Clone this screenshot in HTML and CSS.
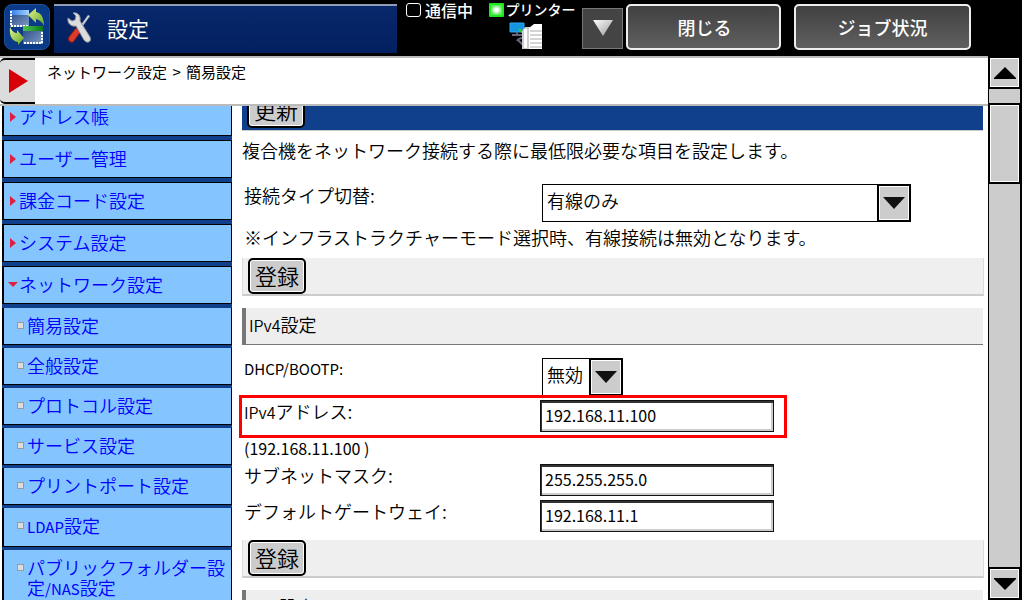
FILE: index.html
```html
<!DOCTYPE html>
<html lang="ja">
<head>
<meta charset="utf-8">
<meta name="viewport" content="width=device-width, initial-scale=1">
<title>設定</title>
<link rel="stylesheet" href="styles.css">
</head>
<body>
<header class="topbar">
  <button class="switch" type="button" aria-label="画面切替">
    <svg viewBox="0 0 46 46" width="46" height="46">
      <defs>
        <linearGradient id="leaf" x1="0" y1="0" x2="1" y2="1"><stop offset="0" stop-color="#e4f58a"/><stop offset="1" stop-color="#62a428"/></linearGradient>
        <linearGradient id="pane" x1="0" y1="0" x2="1" y2="1"><stop offset="0" stop-color="#23457f"/><stop offset="1" stop-color="#7f9cc8"/></linearGradient>
        <linearGradient id="bar1"><stop offset="0" stop-color="#2a78e8"/><stop offset="1" stop-color="#a8d4ff"/></linearGradient>
        <linearGradient id="bar2"><stop offset="0" stop-color="#4fc44f"/><stop offset="1" stop-color="#0b7a18"/></linearGradient>
      </defs>
      <rect x="6" y="6" width="19" height="17" fill="url(#pane)"/>
      <path d="M6 6h19v5H6z" fill="url(#bar1)"/>
      <path d="M7 7v15h18" fill="none" stroke="#fff" stroke-width="2" stroke-dasharray="2 1"/>
      <path d="M24 11l8-7v4c5 1 8 5 8 14-2-4-4-6-8-7v4z" fill="url(#leaf)"/>
      <rect x="19" y="22" width="20" height="18" fill="url(#pane)"/>
      <path d="M19 22h20v5H19z" fill="url(#bar2)"/>
      <path d="M38 28v11H20" fill="none" stroke="#fff" stroke-width="2" stroke-dasharray="2 1"/>
      <path d="M6 23c2 4 4 6 7 6v-3l7 8-6 7v-3c-6-1-9-6-8-15z" fill="url(#leaf)"/>
    </svg>
  </button>
  <h1 class="title">
    <svg viewBox="0 0 26 34" width="26" height="34" aria-hidden="true">
      <path d="M21 4l2 1L13 19l-2-1z" fill="#c9ccd2"/>
      <path d="M9 17l5 3-7 10c-2 3-7 0-5-4z" fill="#dc3a2c" stroke="#8c1a12"/>
      <path d="M1 7l4 3 3-1 1-4-3-3c5-1 8 3 7 8l10 16c2 5-3 7-6 3L9 15C4 16 0 12 1 7z" fill="#dcdcdc" stroke="#8d929c"/>
    </svg>
    <span>設定</span>
  </h1>
  <div class="status"><span class="lamp"></span>通信中</div>
  <div class="printer">
    <div class="printer-name"><span class="lamp on"></span>プリンター</div>
    <svg viewBox="0 0 34 28" width="34" height="28" aria-hidden="true">
      <path d="M1 1h14v9H1z" fill="#1595e0" stroke="#2fa8ee"/>
      <path d="M8 10v3M3 13h10M8 19c1-2 3-3 6-3M9 18l5 5" stroke="#667" stroke-width="2" fill="none"/>
      <path d="M10 7l5 5" stroke="#27d51f" stroke-width="2"/>
      <path d="M13 9l3-4h5v22h-8z" fill="#c9ced2"/>
      <path d="M15 7h3v19h-3z" fill="#fff"/>
      <path d="M20 6l5-4h8v25H20z" fill="#fff"/>
      <path d="M21 9h12M21 13h12M21 17h12M21 21h12M21 25h12" stroke="#aaa"/>
    </svg>
  </div>
  <button class="more" type="button" aria-label="詳細">
    <svg viewBox="0 0 20 17" width="20" height="17"><defs><linearGradient id="tri" x2="1" y2="1"><stop offset="0" stop-color="#fff"/><stop offset="1" stop-color="#999"/></linearGradient></defs><path d="M0 0h20L10 16z" fill="url(#tri)"/></svg>
  </button>
  <button class="key close" type="button">閉じる</button>
  <button class="key job" type="button">ジョブ状況</button>
</header>

<div class="screen">
  <div class="page">
    <nav class="crumbs" aria-label="パンくず">
      <button class="expand" type="button" aria-label="メニュー"><svg viewBox="0 0 19 24" width="19" height="24"><path d="M0 0l19 12L0 24z" fill="#d80008"/></svg></button>
      <span>ネットワーク設定<span class="sep"> &gt; </span>簡易設定</span>
    </nav>
    <div class="columns">
      <nav class="menu" aria-label="設定メニュー">
        <a class="item" href="#">アドレス帳</a>
        <a class="item" href="#">ユーザー管理</a>
        <a class="item" href="#">課金コード設定</a>
        <a class="item" href="#">システム設定</a>
        <a class="item open" href="#">ネットワーク設定</a>
        <a class="sub" href="#">簡易設定</a>
        <a class="sub" href="#">全般設定</a>
        <a class="sub" href="#">プロトコル設定</a>
        <a class="sub" href="#">サービス設定</a>
        <a class="sub" href="#">プリントポート設定</a>
        <a class="sub" href="#"><span class="caps">LDAP</span>設定</a>
        <a class="sub" href="#">パブリックフォルダー設定<span class="caps">/NAS</span>設定</a>
      </nav>
      <main class="content">
        <div class="refresh"><button class="btn" type="button">更新</button></div>
        <p class="intro">複合機をネットワーク接続する際に最低限必要な項目を設定します。</p>
        <div class="row">
          <label for="type">接続タイプ切替:</label>
          <div class="pick wide"><select id="type"><option>有線のみ</option></select><span class="arrow"></span></div>
        </div>
        <p class="note">※インフラストラクチャーモード選択時、有線接続は無効となります。</p>
        <div class="actions"><button class="btn" type="button">登録</button></div>
        <h2 class="heading"><span class="latin">IPv4</span>設定</h2>
        <div class="row">
          <label for="dhcp" class="caps">DHCP/BOOTP:</label>
          <div class="pick"><select id="dhcp"><option>無効</option></select><span class="arrow"></span></div>
        </div>
        <div class="row marked">
          <label for="ip"><span class="latin">IPv4</span>アドレス:</label>
          <input id="ip" type="text" value="192.168.11.100">
        </div>
        <p class="current">(192.168.11.100 )</p>
        <div class="row">
          <label for="mask">サブネットマスク:</label>
          <input id="mask" type="text" value="255.255.255.0">
        </div>
        <div class="row">
          <label for="gw">デフォルトゲートウェイ:</label>
          <input id="gw" type="text" value="192.168.11.1">
        </div>
        <div class="actions"><button class="btn" type="button">登録</button></div>
        <h2 class="heading"><span class="caps">DNS</span>設定</h2>
      </main>
    </div>
  </div>
  <div class="scroll">
    <button class="step" type="button" aria-label="上へ"><svg viewBox="0 0 22 12" width="22" height="12"><path d="M11 0l11 11v1H0v-1z"/></svg></button>
    <span class="track before"></span>
    <span class="thumb"></span>
    <span class="track after"></span>
    <button class="step" type="button" aria-label="下へ"><svg viewBox="0 0 22 12" width="22" height="12"><path d="M11 12l11-11V0H0v1z"/></svg></button>
  </div>
</div>
</body>
</html>
```
FILE: styles.css
```css
*, *::before, *::after { box-sizing: border-box; }
body {
  margin: 0;
  height: 100vh;
  display: flex;
  flex-direction: column;
  overflow: hidden;
  background: #000;
  color: #000;
  font: 350 18px/22px "Noto Sans CJK JP", sans-serif;
}
button, input, select { font: inherit; color: inherit; margin: 0; border-radius: 0; }
button { padding: 0; cursor: pointer; }
h1, h2, p { margin: 0; font-weight: inherit; }
svg { display: block; }

.topbar { display: flex; align-items: flex-start; flex: none; padding: 4px 51px 3px 4px; color: #fff; }
.switch { width: 46px; height: 46px; border: 1px solid #1d4f9c; border-radius: 8px; background: #0b3a88; overflow: hidden; }
.switch svg { margin: -1px; }
.title {
  flex: 1; display: flex; align-items: center; gap: 14px; height: 49px; margin-left: 4px; padding: 0 13px 4px;
  border-top: 2px solid #8f9db8; background: linear-gradient(#08286c, #02205f);
  font-size: 21px; font-weight: 400;
}
.status { display: flex; align-items: center; gap: 4px; height: 12px; margin-left: 9px; font-size: 16px; font-weight: 500; }
.lamp { flex: none; width: 15px; height: 14px; border: 1px solid #fff; border-radius: 3px; }
.lamp.on { border: 2px solid #20e820; border-radius: 1px; background: radial-gradient(#fff 20%, #5be85b 70%); }
.printer { display: flex; flex-direction: column; align-items: center; gap: 6px; margin: -2px 0 0 16px; width: 86px; }
.printer-name { display: flex; align-items: center; gap: 2px; height: 14px; font-size: 14px; font-weight: 500; white-space: nowrap; }
.printer svg { margin-right: 12px; }
.printer .lamp { margin-top: 2px; }
.more { display: grid; place-items: center; width: 41px; height: 41px; margin: 4px 3px 0 7px; border: 1px solid #777; background: #444; }
.key { height: 46px; border: 2px solid #eee; border-radius: 5px; background: linear-gradient(#404040, #606060); font-weight: 500; }
.close { width: 155px; margin-right: 13px; padding-left: 2px; }
.job { width: 177px; }

.screen { flex: 1; display: flex; min-height: 0; }
.page { flex: 1; display: flex; flex-direction: column; min-width: 0; background: #fff; border-top: 2px solid #bbb; }
.crumbs { display: flex; flex: none; gap: 12px; height: 48px; border-bottom: 2px solid #bbb; font-size: 15px; line-height: 28px; font-weight: 400; }
.sep { padding: 0 2px; }
.expand { width: 35px; display: flex; align-items: center; padding: 0 0 0 9px; border: solid #000; border-width: 2px 0; border-radius: 5px 0 0 5px; background: #dcdcdc; }

.columns { flex: 1; display: flex; gap: 10px; min-height: 0; overflow: hidden; padding-left: 2px; }
.menu { flex: none; width: 230px; display: flex; flex-direction: column; gap: 3px; margin-top: -8px; background: #10408c; }
.menu a { position: relative; flex: none; color: #00f; text-decoration: none; border: 1px solid #000; border-width: 0 1px 1px 2px; background: #84c5ff; }
.menu .item { height: 38px; border-width: 1px 1px 1px 2px; padding: 6px 0 0 15px; margin-bottom: 1px; }
.item::before { content: ""; position: absolute; left: 6px; top: 13px; border: solid transparent; border-width: 5px 0 5px 6px; border-left-color: #e02040; }
.item.open::before { left: 4px; top: 15px; border-width: 5px 5px 0; border-color: #e02040 transparent transparent; }
.menu .sub { min-height: 37px; padding: 7px 0 9px 23px; line-height: 20px; }
.sub::before { content: ""; position: absolute; left: 13px; top: 14px; width: 7px; height: 7px; border: 1px solid #9a9a9a; background: #ddd; }
.latin { font-size: 16px; }
.caps { font-size: 15px; font-weight: 400; }

.content { flex: 1; min-width: 0; padding-right: 5px; }
.refresh { height: 39px; margin-top: -14px; padding-left: 5px; background: #10408c; border-bottom: 1px solid #ccc; }
.btn { display: block; width: 58px; height: 36px; border: 2px solid #000; border-radius: 5px; background: #ccc; box-shadow: inset 0 0 0 1px #fff; font-size: 22px; line-height: 28px; padding-bottom: 2px; }
.intro { margin: 8px 0 23px; }
.row { display: grid; grid-template-columns: 296px 1fr; padding-left: 2px; margin-bottom: 4px; }
.row > * { justify-self: start; }
.pick { position: relative; margin-left: 2px; width: 81px; }
.pick.wide { width: 369px; }
.pick select { appearance: none; display: block; width: 100%; height: 38px; padding: 0 36px 6px 4px; border: 1px solid #000; background: #fff; }
.arrow { position: absolute; inset: 0 0 0 auto; width: 34px; border: 2px solid #000; background: #ccc; box-shadow: inset 0 0 0 1px #fff; pointer-events: none; }
.arrow::after { content: ""; position: absolute; left: 4px; top: 11px; border: solid transparent; border-width: 12px 11px 0; border-top-color: #111; }
.note { padding-left: 2px; margin-bottom: 10px; }
.actions { height: 38px; margin-right: -1px; padding-left: 5px; border: 1px solid #ddd; border-width: 0 1px 2px; border-bottom-color: #ccc; background: #efefef; }
.heading { height: 37px; margin: 12px 0 13px; padding: 5px 3px; border-left: 4px solid #777; border-bottom: 1px solid #777; background: #eee; font-size: 18px; }
.row input { width: 234px; height: 32px; padding: 0 4px 2px; border: 1px solid #111; background: #fff; box-shadow: inset 1px 2px #333, inset -2px -2px #ccc; font-size: 16px; font-weight: 400; }
.marked { position: relative; }
.marked::before { content: ""; position: absolute; left: -3px; top: -5px; width: 548px; height: 43px; border: 3px solid #f00; pointer-events: none; }
.current { padding: 1px 0 1px 2px; margin-bottom: 4px; font-size: 16px; font-weight: 400; }
.row + .actions { margin-top: 8px; }

.scroll { flex: none; width: 34px; display: flex; flex-direction: column; align-items: center; gap: 2px; padding: 2px 2px 2px 1px; background: #000; }
.step, .thumb { width: 29px; border: 1px solid #fff; background: #ccc; }
.step { flex: none; height: 29px; display: grid; place-items: center; }
.thumb { height: 77px; }
.track { width: 31px; background: #ccc; }
.before { height: 14px; }
.after { flex: 1; }
```
